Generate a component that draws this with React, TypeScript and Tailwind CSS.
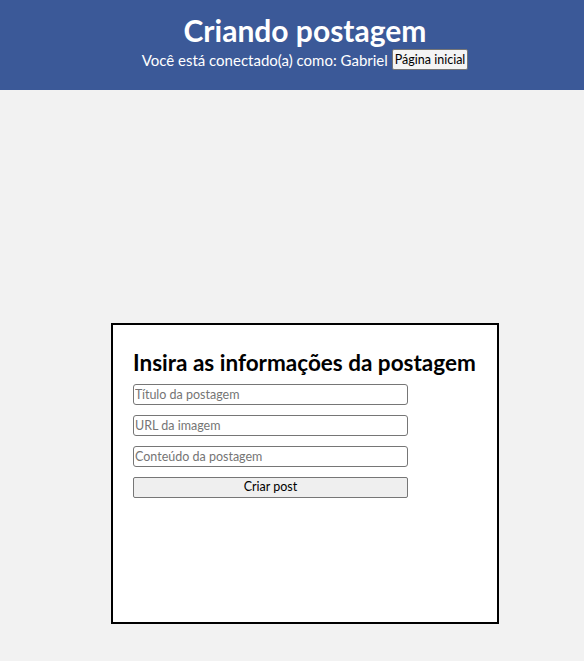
export default function App() {
  return (
    <div className="min-h-[661px] bg-[#f2f2f2] font-['Lato',sans-serif]">
      <header className="h-[90px] bg-[#3b5998] flex flex-col items-center pt-[12px] pl-[26px] text-white">
        <h1 className="text-[30px] leading-[36px] font-bold">Criando postagem</h1>
        <div className="flex items-center gap-[4px] text-[15px] leading-[20px] mt-[1px]">
          <span>Você está conectado(a) como: Gabriel</span>
          <button className="bg-[#f4f4f4] text-black text-[12.5px] leading-[15px] px-[2px] py-[2px] border border-[#767676] rounded-[2px]">
            Página inicial
          </button>
        </div>
      </header>

      <main className="pt-[233px] pl-[111px]">
        <div className="w-[388px] h-[301px] bg-white border-2 border-black pt-[23px] px-[20px]">
          <h2 className="text-[22.5px] leading-[30px] font-bold text-black">Insira as informações da postagem</h2>
          <form className="flex flex-col gap-[10px] mt-[6px] w-[275px]">
            <input
              placeholder="Título da postagem"
              className="h-[21px] px-[1px] text-[12.5px] border border-[#767676] rounded-[3px] placeholder:text-[#757575] bg-white"
            />
            <input
              placeholder="URL da imagem"
              className="h-[21px] px-[1px] text-[12.5px] border border-[#767676] rounded-[3px] placeholder:text-[#757575] bg-white"
            />
            <input
              placeholder="Conteúdo da postagem"
              className="h-[21px] px-[1px] text-[12.5px] border border-[#767676] rounded-[3px] placeholder:text-[#757575] bg-white"
            />
            <button
              type="button"
              className="h-[21px] text-[12.5px] text-black bg-[#efefef] border border-[#767676] rounded-[2px]"
            >
              Criar post
            </button>
          </form>
        </div>
      </main>
    </div>
  );
}
